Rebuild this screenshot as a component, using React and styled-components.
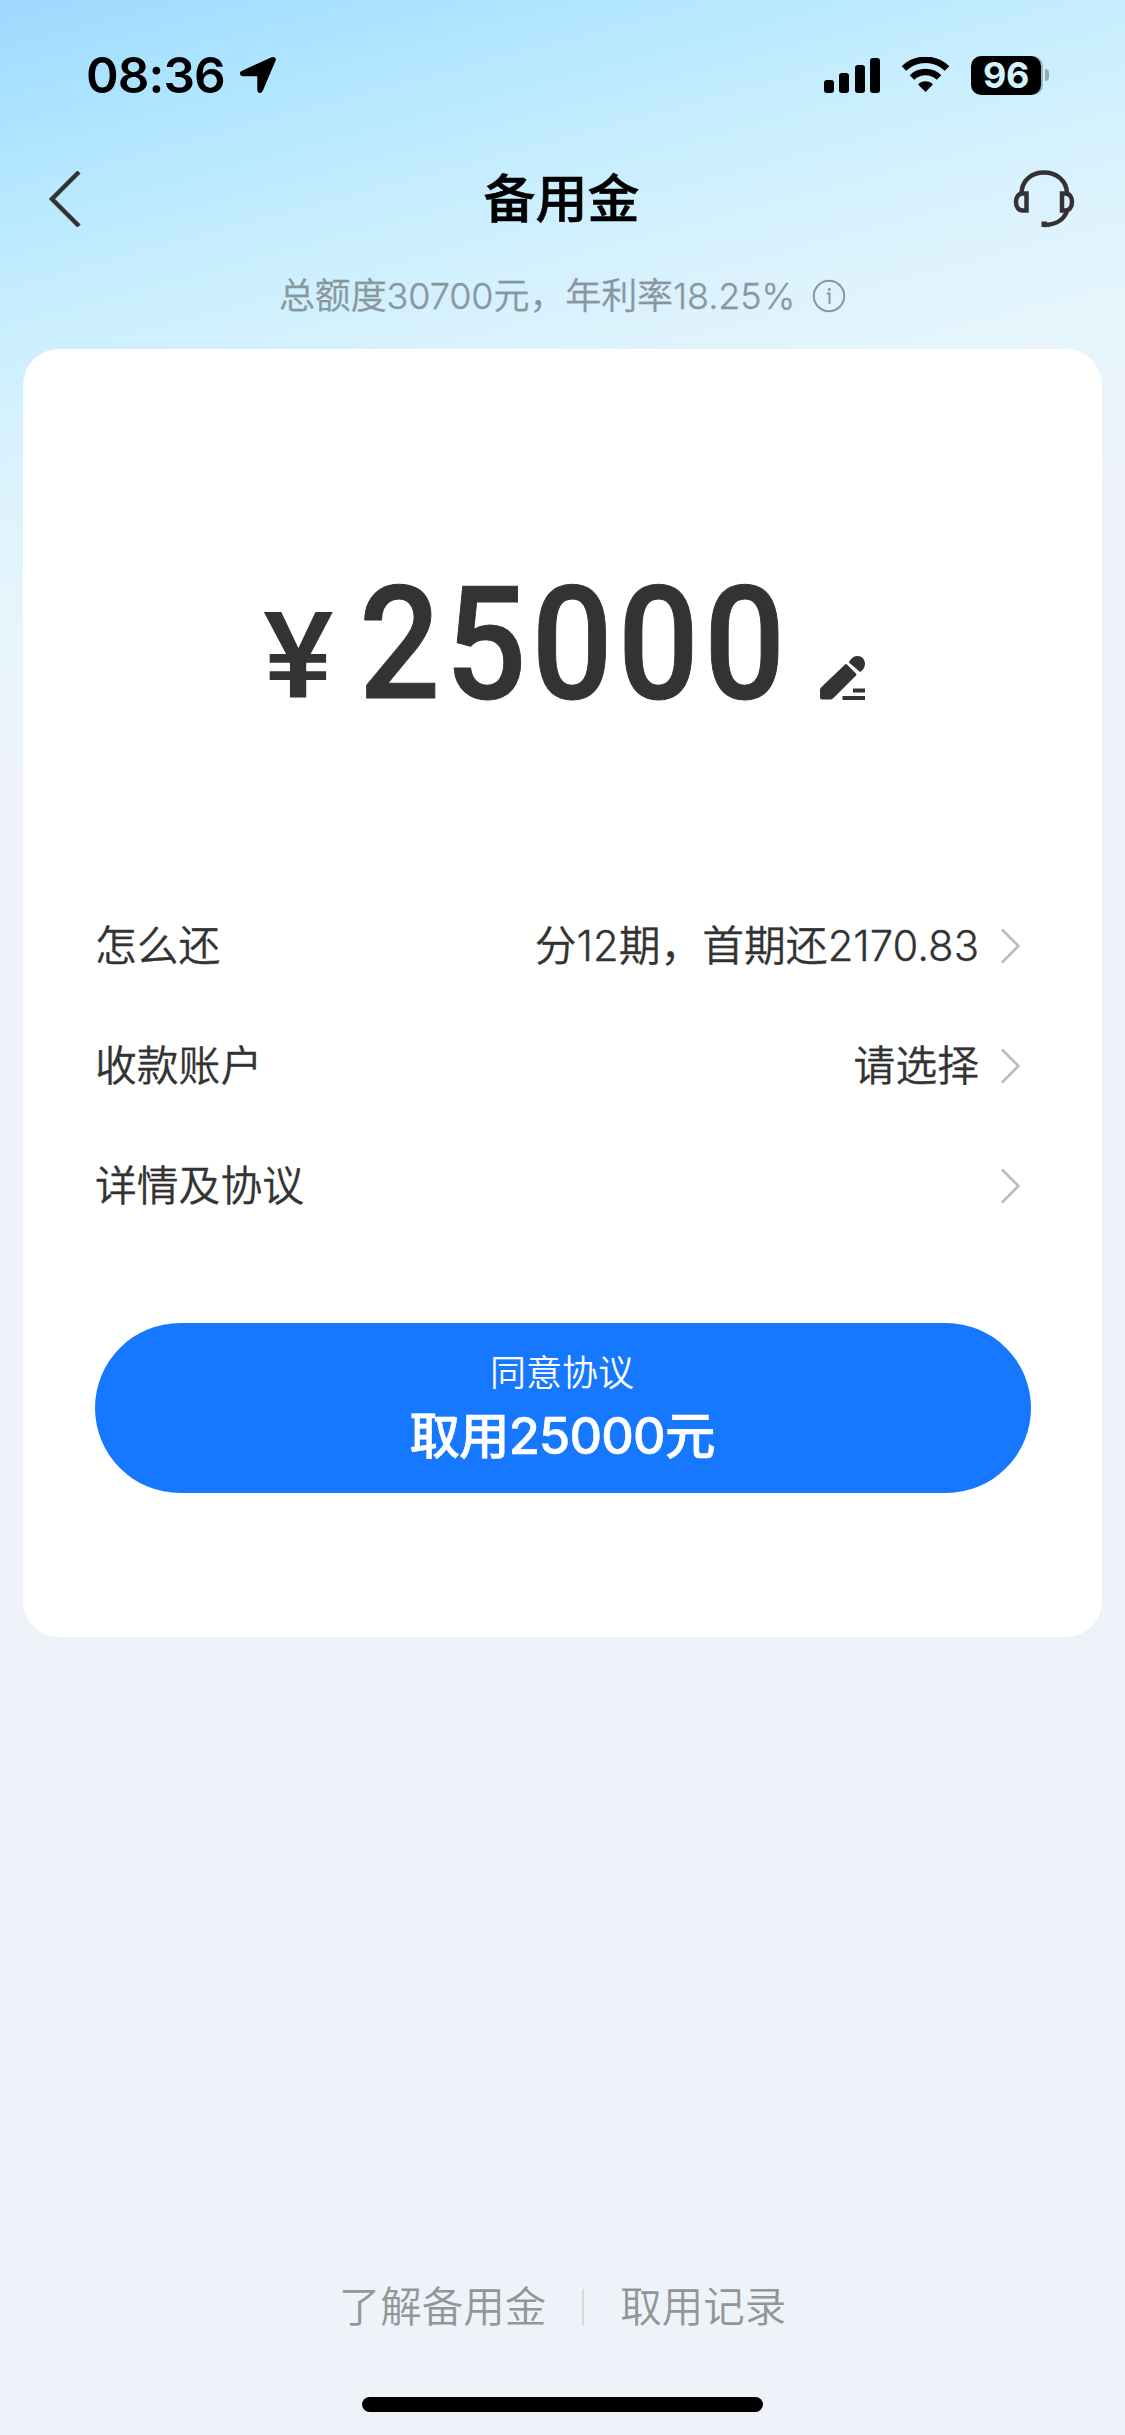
import React from "react";
import styled, { createGlobalStyle } from "styled-components";

const rows = [
  { label: "怎么还", value: "分12期，首期还2170.83" },
  { label: "收款账户", value: "请选择" },
  { label: "详情及协议", value: "" },
];

const signalBars = [13, 20, 28, 35];

const App = () => {
  return (
    <Page>
      <GlobalStyle />
      <StatusBar>
        <Clock>
          <span>08:36</span>
          <svg width="38" height="38" viewBox="0 0 38 38">
            <path
              d="M3.5 15.6 33 2.2c2-.8 3.4.5 2.5 2.5L22.8 34.5c-1 2.2-3.5 1.8-3.5-.6V20.3c0-.7-.3-1-1-1H4.2c-2.6 0-3.2-2.7-.7-3.7z"
              stroke="#000"
              strokeWidth="2"
              strokeLinejoin="round"
            />
          </svg>
        </Clock>
        <Indicators>
          <Signal>
            {signalBars.map((height) => (
              <SignalBar key={height} $height={height} />
            ))}
          </Signal>
          <WifiIcon width="49" height="36" viewBox="0 0 49 36">
            <path d="M3 11.5a31 31 0 0 1 43 0" />
            <path d="M11 20.5a19.5 19.5 0 0 1 27 0" />
            <path
              d="M24.5 35 17.8 28.3a1.2 1.2 0 0 1 .1-1.8c4-3 9.2-3 13.2 0a1.2 1.2 0 0 1 .1 1.800z"
              className="dot"
            />
          </WifiIcon>
          <Battery>
            <Charge>96</Charge>
            <Nub />
          </Battery>
        </Indicators>
      </StatusBar>

      <NavBar>
        <svg width="36" height="56" viewBox="0 0 36 56">
          <path
            d="M34 1 7 28 34 55"
            fill="none"
            stroke="#333"
            strokeWidth="4.5"
          />
        </svg>
        <h1>备用金</h1>
        <HeadsetIcon width="64" height="60" viewBox="0 0 64 60">
          <path d="M9.5 24C10 11 20 3.5 32 3.5S54.5 11 55 24" />
          <path d="M14.5 24.5H11C6.500 24.500 4 28 4 33s2.500 8.500 7 8.500h3.500z" />
          <path d="M50 24.5h3c4.5 0 7 3.5 7 8.5s-2.5 8.5-7 8.500H50z" />
          <path d="M55 42C52 50.5 44 56 32 56" />
          <path d="M30.500 53.500h3.500v3.500h-3.500z" className="mic" />
        </HeadsetIcon>
      </NavBar>

      <Quota>
        <span>总额度30700元，年利率18.25%</span>
        <svg width="34" height="34" viewBox="0 0 34 34" fill="none">
          <circle cx="17" cy="17" r="15.2" stroke="#89979d" strokeWidth="2" />
          <path d="M14.8 14.5h2.7V25" stroke="#89979d" strokeWidth="2" />
          <circle cx="17.3" cy="10.5" r="1.4" fill="#89979d" />
        </svg>
      </Quota>

      <Card>
        <Amount>
          <Currency>¥</Currency>
          <Figure>25000</Figure>
          <svg width="45" height="44" viewBox="0 0 45 44" fill="#333">
            <path d="M25 8.5q1-1 2 0l9 9q1 1 0 2L14 41.5q-2 2-3.5 2H2q-2 0-2-2V34q0-1.5 1.5-3z" />
            <path d="M29.3 5.5C31.5 1.5 34.5 0 37.5 0c4.5 0 7.5 3.5 7.5 7.8 0 3-1.5 5.7-4 7.7q-.8.6-1.5 0l-10-8.5q-.8-.6-.2-1.5z" />
            <path d="M33 32.5h12v4H33zM22.5 40H45v4H22.5z" />
          </svg>
        </Amount>
        <List>
          {rows.map((row) => (
            <Row key={row.label}>
              <span>{row.label}</span>
              <Value>
                <span>{row.value}</span>
                <svg width="22" height="38" viewBox="0 0 22 38">
                  <path
                    d="M3 2.5 19.5 19 3 35.5"
                    fill="none"
                    stroke="#bbb"
                    strokeWidth="2.5"
                  />
                </svg>
              </Value>
            </Row>
          ))}
        </List>
        <Submit>
          <small>同意协议</small>
          <strong>取用25000元</strong>
        </Submit>
      </Card>

      <Footer>
        <Links>
          <a>了解备用金</a>
          <Divider />
          <a>取用记录</a>
        </Links>
        <HomeIndicator />
      </Footer>
    </Page>
  );
};

const GlobalStyle = createGlobalStyle`
  * {
    box-sizing: border-box;
    margin: 0;
    padding: 0;
  }
  body {
    background: #eff3f9;
    font-family: Inter, "Noto Sans CJK SC", sans-serif;
    font-weight: 350;
    color: #333;
  }
  svg {
    display: block;
    flex-shrink: 0;
  }
`;

const Page = styled.div`
  width: 1125px;
  height: 2435px;
  display: flex;
  flex-direction: column;
  background: linear-gradient(
    165deg,
    #a0d7ff 0,
    #a6dfff 70px,
    #b0e6ff 150px,
    #c8eefe 310px,
    #daf2fe 450px,
    #e5f5fc 580px,
    #eff3f9 780px
  );
`;

const StatusBar = styled.header`
  height: 150px;
  padding: 0 76px 0 86px;
  display: flex;
  justify-content: space-between;
  align-items: center;
`;

const Clock = styled.div`
  display: flex;
  align-items: center;
  gap: 15px;
  font-size: 49.5px;
  font-weight: 600;
  color: #000;
  span {
    width: 138px;
    letter-spacing: -0.9px;
    white-space: nowrap;
  }
`;

const Indicators = styled.div`
  display: flex;
  align-items: center;
`;

const Signal = styled.div`
  display: flex;
  align-items: flex-end;
  gap: 5.3px;
  margin-right: 21px;
`;

const SignalBar = styled.i`
  width: 10px;
  height: ${(props) => props.$height}px;
  border-radius: 3px;
  background: #000;
`;

const WifiIcon = styled.svg`
  margin-right: 21px;
  path {
    fill: none;
    stroke: #000;
    stroke-width: 6.5;
  }
  .dot {
    fill: #000;
    stroke: none;
  }
`;

const Battery = styled.div`
  display: flex;
  align-items: center;
  gap: 4px;
`;

const Charge = styled.div`
  width: 70px;
  height: 39px;
  border-radius: 10px;
  background: #000;
  color: #d3f2ff;
  font-size: 36px;
  font-weight: 700;
  line-height: 39px;
  text-align: center;
  letter-spacing: -0.5px;
  box-shadow: 2px 0 0 #9db7c2;
`;

const Nub = styled.i`
  width: 4px;
  height: 12px;
  border-radius: 0 4px 4px 0;
  background: #93aab4;
`;

const NavBar = styled.nav`
  height: 98px;
  padding: 0 49px 0 45px;
  display: flex;
  justify-content: space-between;
  align-items: center;
  h1 {
    padding: 2px 0 0 30px;
    font-size: 52px;
    font-weight: 500;
    line-height: 1;
    -webkit-text-stroke: 0.6px #000;
    color: #000;
  }
`;

const HeadsetIcon = styled.svg`
  fill: none;
  stroke: #333;
  stroke-width: 4.5;
  .mic {
    fill: #333;
    stroke-width: 2;
  }
`;

const Quota = styled.div`
  height: 101px;
  padding-bottom: 5px;
  display: flex;
  justify-content: center;
  align-items: center;
  gap: 17px;
  font-size: 36px;
  letter-spacing: -0.1px;
  line-height: 1;
  -webkit-text-stroke: 0.3px #89979d;
  color: #89979d;
`;

const Card = styled.main`
  width: 1079px;
  height: 1288px;
  margin: 0 auto;
  padding: 0 72px;
  border-radius: 36px;
  background: #fff;
`;

const Amount = styled.div`
  height: 538px;
  padding: 0 0 187px 168px;
  display: flex;
  align-items: flex-end;
  font-family: Roboto, sans-serif;
  font-weight: 500;
`;

const Currency = styled.span`
  width: 96px;
  font-size: 121px;
  line-height: 86px;
  transform: scaleX(1.1);
  transform-origin: left;
`;

const Figure = styled.span`
  width: 461px;
  font-size: 158px;
  line-height: 112px;
  letter-spacing: 5.5px;
  -webkit-text-stroke: 1px #333;
  transform: scaleX(0.905);
  transform-origin: left;
`;

const List = styled.ul`
  list-style: none;
`;

const Row = styled.li`
  height: 120px;
  padding-bottom: 2px;
  display: flex;
  justify-content: space-between;
  align-items: center;
  font-size: 41.8px;
  line-height: 60px;
  -webkit-text-stroke: 0.3px #333;
`;

const Value = styled.div`
  display: flex;
  align-items: center;
  gap: 20px;
  padding-right: 9px;
`;

const Submit = styled.button`
  width: 936px;
  height: 170px;
  margin-top: 76px;
  padding: 5px 2px 0 0;
  border: none;
  border-radius: 85px;
  background: #1677ff;
  color: #fff;
  font-family: inherit;
  display: flex;
  flex-direction: column;
  justify-content: center;
  align-items: center;
  small {
    font-size: 36px;
    font-weight: 350;
    line-height: 50px;
  }
  strong {
    font-size: 50.5px;
    font-weight: 500;
    line-height: 75px;
    letter-spacing: -0.8px;
    -webkit-text-stroke: 0.6px #fff;
  }
`;

const Footer = styled.footer`
  margin-top: auto;
  padding-bottom: 23px;
  display: flex;
  flex-direction: column;
  align-items: center;
  gap: 60px;
`;

const Links = styled.div`
  display: flex;
  align-items: center;
  font-size: 41.5px;
  line-height: 60px;
  color: #939699;
`;

const Divider = styled.i`
  width: 2px;
  height: 36px;
  margin: 0 36px;
  background: #d5d9de;
`;

const HomeIndicator = styled.div`
  width: 401px;
  height: 15px;
  border-radius: 8px;
  background: #000;
`;

export default App;
